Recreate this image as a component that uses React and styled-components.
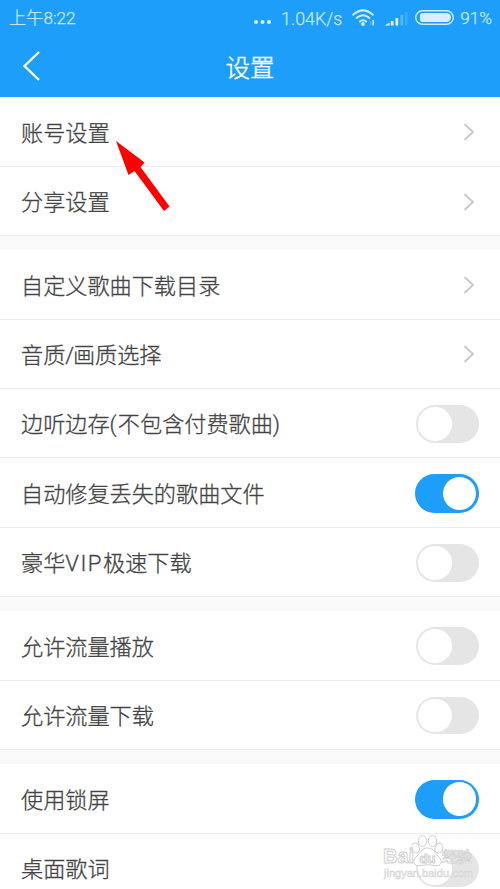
import React, { useState } from 'react';
import styled, { createGlobalStyle } from 'styled-components';

const GlobalStyle = createGlobalStyle`
  body {
    margin: 0;
    background: #fff;
    overflow: hidden;
    font-family: 'Noto Sans CJK SC', sans-serif;
  }
`;

const Screen = styled.div`
  position: relative;
  width: 500px;
  height: 889px;
  overflow: hidden;
  background: #fff;
`;

const Header = styled.header`
  height: 97.2px;
  background: #1c9efa;
  color: #fff;
`;

const StatusBar = styled.div`
  display: flex;
  align-items: center;
  box-sizing: border-box;
  height: 37px;
  padding: 0 8px 0 9px;
  color: #cfeaff;
  white-space: nowrap;
`;

const StatusText = styled.span`
  font-family: Roboto, 'Noto Sans CJK SC', sans-serif;
  font-size: ${(p) => p.$size || 17.2}px;
  font-weight: 300;
  line-height: 37px;
  -webkit-text-stroke: 0.25px #cfeaff;
`;

const StatusIcons = styled.svg`
  display: block;
  margin: 0 5px 0 9px;
`;

const Dots = styled.svg`
  margin: 0 10px 0 auto;
`;

const TitleBar = styled.div`
  display: grid;
  grid-template-columns: 60px 1fr 60px;
  align-items: center;
  height: 59px;
`;

const Back = styled.button`
  display: flex;
  padding: 0 0 0 21px;
  border: 0;
  background: none;
`;

const Title = styled.h1`
  margin: 0;
  font-size: 24.5px;
  font-weight: 300;
  line-height: 60px;
  text-align: center;
  -webkit-text-stroke: 0.4px #fff;
`;

const Group = styled.section`
  & + & {
    border-top: 14.1px solid #f9f9f9;
  }
`;

const Row = styled.div`
  display: flex;
  align-items: center;
  justify-content: space-between;
  box-sizing: border-box;
  height: 69.45px;
  padding: 1.5px 21px 0;
  border-bottom: 1px solid #ececec;
`;

const Label = styled.span`
  margin-bottom: 3px;
  color: #444;
  font-size: 22.15px;
  font-weight: 300;
  line-height: 32px;
  white-space: nowrap;
  -webkit-text-stroke: 0.3px #444;
`;

const Latin = styled.span`
  font-family: Roboto, sans-serif;
  line-height: 1;
  letter-spacing: ${(p) => p.$gap}px;
`;

const Chevron = styled.svg`
  margin-right: 4px;
`;

const Switch = styled.button`
  display: flex;
  align-items: center;
  justify-content: ${(p) => (p.$on ? 'flex-end' : 'flex-start')};
  box-sizing: border-box;
  width: ${(p) => (p.$on ? 64 : 63)}px;
  height: ${(p) => (p.$on ? 39 : 37.5)}px;
  padding: 0 ${(p) => (p.$on ? 3 : 2)}px;
  border: 0;
  border-radius: 20px;
  background: ${(p) => (p.$on ? '#1c9efa' : '#e5e5e5')};
`;

const Knob = styled.span`
  width: 33.5px;
  height: 33.5px;
  border-radius: 50%;
  background: #fff;
`;

const Arrow = styled.svg`
  position: absolute;
  left: 110px;
  top: 136px;
`;

const Watermark = styled.svg`
  position: absolute;
  left: 376px;
  top: 828px;
`;

const groups = [
  [{ text: '账号设置' }, { text: '分享设置' }],
  [
    { text: '自定义歌曲下载目录' },
    { text: '音质/画质选择' },
    { text: '边听边存(不包含付费歌曲)', on: false },
    { text: '自动修复丢失的歌曲文件', on: true },
    { text: '豪华VIP极速下载', on: false },
  ],
  [
    { text: '允许流量播放', on: false },
    { text: '允许流量下载', on: false },
  ],
  [
    { text: '使用锁屏', on: true },
    { text: '桌面歌词', on: false },
  ],
];

const gapFor = (part) => {
  if (part === '/') return -1.2;
  return /[()]/.test(part) ? 1.2 : 1.5;
};

// latin letters and brackets use their own font and spacing
const renderLabel = (text) =>
  text.split(/([A-Z/]+|[()])/).map((part, i) =>
    i % 2 ? (
      <Latin key={i} $gap={gapFor(part)}>
        {part}
      </Latin>
    ) : (
      part
    )
  );

const SettingRow = ({ item }) => {
  const [on, setOn] = useState(item.on);

  return (
    <Row>
      <Label>{renderLabel(item.text)}</Label>
      {on === undefined ? (
        <Chevron width="12" height="18" viewBox="0 0 12 18" fill="none" stroke="#c8c8c8" strokeWidth="1.8">
          <path d="M1.5 1 L10 9 L1.5 17" />
        </Chevron>
      ) : (
        <Switch $on={on} onClick={() => setOn(!on)}>
          <Knob />
        </Switch>
      )}
    </Row>
  );
};

const App = () => {
  return (
    <Screen>
      <GlobalStyle />
      <Header>
        <StatusBar>
          <StatusText>上午8:22</StatusText>
          <Dots width="18" height="12" viewBox="0 0 18 12" fill="#dff1ff">
            <circle cx="3" cy="9" r="2" />
            <circle cx="9.5" cy="9" r="2" />
            <circle cx="16" cy="9" r="2" />
          </Dots>
          <StatusText $size={17.8}>1.04K/s</StatusText>
          <StatusIcons width="104" height="20" viewBox="0 0 104 20" fill="none" stroke="#cfeaff">
            {/* wifi */}
            <g strokeWidth="2">
              <path d="M1.5 6.2 Q12 -3.5 22.500 6.2" />
              <path d="M5 9.600 Q12 2.800 19 9.600" />
              <path d="M8.3 13 Q12 9.500 15.7 13" />
            </g>
            <circle cx="12" cy="15" r="1.9" fill="#cfeaff" stroke="none" />
            <path d="M19.8 12.5v4" opacity=".4" />
            <path d="M22.2 11v5.5" strokeWidth="1.5" />
            {/* signal */}
            <g fill="#dff1ff" stroke="none">
              <path d="M34 16.500 L38.5 13.500 V16.500 Z" />
              <rect x="39.8" y="12" width="2.7" height="4.5" />
              <rect x="44.5" y="9" width="2.700" height="7.5" />
              <rect x="49.500" y="6" width="2.700" height="10.5" opacity=".3" />
              <rect x="54" y="3" width="2.500" height="13.5" opacity=".18" />
            </g>
            {/* battery */}
            <rect x="64.7" y="1.7" width="37.6" height="13.6" rx="6.8" strokeWidth="1.4" />
            <path d="M71 4 H95.5 a4.5 4.5 0 0 1 0 9 H71 Q69 13 69 10.5 V6.500 Q69 4 71 4Z" fill="#d7eeff" stroke="none" />
          </StatusIcons>
          <StatusText>91%</StatusText>
        </StatusBar>
        <TitleBar>
          <Back aria-label="返回">
            <svg width="20" height="32" viewBox="0 0 20 32" fill="none" stroke="#fff" strokeWidth="2.3">
              <path d="M18 1 L3.5 15 L18 29" />
            </svg>
          </Back>
          <Title>设置</Title>
        </TitleBar>
      </Header>

      {groups.map((items, i) => (
        <Group key={i}>
          {items.map((item) => (
            <SettingRow key={item.text} item={item} />
          ))}
        </Group>
      ))}

      <Arrow width="62" height="78" viewBox="0 0 62 78" fill="#fe0000">
        <path d="M6 5 L34.5 26.5 L30.5 31 L59.5 70.5 L54 75 L24.5 35 L18.5 39 Z" />
      </Arrow>

      <Watermark width="110" height="61" viewBox="0 0 110 61" fill="#fff" stroke="#cfcfcf" strokeWidth="1">
        <ellipse cx="39.5" cy="20" rx="3.8" ry="5" transform="rotate(-20 39.5 20)" />
        <ellipse cx="46.5" cy="13" rx="4.2" ry="5.5" />
        <ellipse cx="56.5" cy="13" rx="4.2" ry="5.5" />
        <ellipse cx="63" cy="20" rx="3.8" ry="5" transform="rotate(20 63 20)" />
        <path d="M51.5 20 C45 20 45 25 41 28 C35 33 38 39 44 37.5 Q51.5 36 59 37.5 C65 39 68 33 62 28 C58 25 58 20 51.5 20Z" />
        <g fontFamily="Liberation Sans, sans-serif" strokeWidth="1">
          <text x="7" y="35" fontSize="21" textLength="31" lengthAdjust="spacingAndGlyphs" fontWeight="700">Bai</text>
          <text x="43.5" y="34.5" fontSize="13.5" textLength="16" fontWeight="700">du</text>
          <text x="66" y="34" fontSize="15.3" textLength="30" fontFamily="Noto Sans CJK SC, sans-serif" strokeWidth=".7">经验</text>
        </g>
        <text x="8" y="48.5" fontFamily="Liberation Sans, sans-serif" fontSize="10.5" textLength="89" lengthAdjust="spacingAndGlyphs" fill="#f0f0f0" stroke="#d4d4d4" strokeWidth=".5">jingyan.baidu.com</text>
      </Watermark>
    </Screen>
  );
};

export default App;
